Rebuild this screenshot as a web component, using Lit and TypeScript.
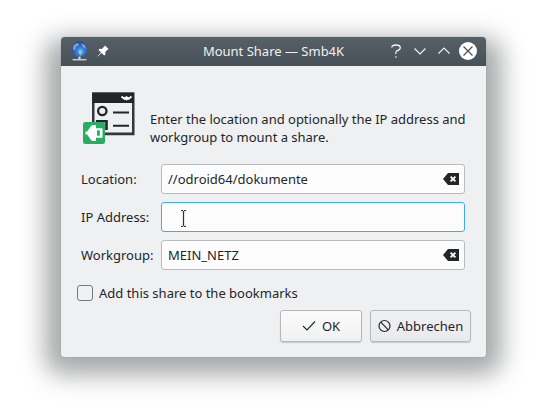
import { LitElement, html, css, svg } from "lit";
import { customElement, property } from "lit/decorators.js";

const clearIcon = svg`<svg class="clear" width="16" height="12" viewBox="0 0 16 12">
  <path d="M0 6 5 0h11v12H5z" fill="#232629"/>
  <path d="m7.6 3.6 4.8 4.8m0-4.8-4.8 4.8" stroke="#fcfcfc" stroke-width="1.9"/>
</svg>`;

@customElement("line-field")
class LineField extends LitElement {
  @property() label = "";
  @property() value = "";
  @property({ type: Boolean, reflect: true }) active = false;

  static styles = css`
    :host { display: grid; grid-template-columns: 80px 304px; height: 30px; align-items: center; }
    .box {
      box-sizing: border-box; height: 30px; border: 1px solid #b9bbbc; border-radius: 3px;
      background: #fcfcfc; display: flex; align-items: center; justify-content: space-between;
      padding: 0 5px 0 6px;
    }
    :host([active]) .box { border-color: #3daee9; padding-left: 17px; }
    .label, .value { white-space: pre; }
    .clear, .beam { display: block; }
    .beam { margin-top: 3px; overflow: visible; }
  `;

  render() {
    return html`<span class="label">${this.label}</span>
      <div class="box">
        ${this.active
          ? svg`<svg class="beam" width="9" height="17" viewBox="0 0 9 17">
              <path d="M2 1.5h5M2 15.5h5M4.5 1v15" stroke="#e4e4e4" stroke-width="3" fill="none"/>
              <path d="M2 .5h2m1 0h2M2 16.5h2m1 0h2M4.5 1v15" stroke="#333" fill="none"/>
            </svg>`
          : html`<span class="value">${this.value}</span>${clearIcon}`}
      </div>`;
  }
}

@customElement("app-root")
class AppRoot extends LitElement {
  static styles = css`
    :host {
      display: block; box-sizing: border-box; height: 418px; padding: 37px 61px 0; overflow: hidden;
      background: #fff; color: #232629; font: 13px/18px "Noto Sans", sans-serif; isolation: isolate;
    }
    .window {
      position: relative; width: 425px; height: 320px; border-radius: 4px 4px 3px 3px; background: #eff0f1;
      box-shadow: 0 0 1px rgba(50, 55, 58, .55); display: flex; flex-direction: column;
    }
    .window::before {
      content: ""; position: absolute; z-index: -1; inset: 1px -16px -18px; border-radius: 18px;
      background: rgba(35, 40, 43, .4); filter: blur(12px);
    }
    .titlebar {
      box-sizing: border-box; height: 29px; padding: 0 9px 1px 10px; border-radius: 4px 4px 0 0;
      background: linear-gradient(#566067, #475057);
      display: grid; grid-template-columns: 130px 1fr 130px; align-items: center; color: #eff0f1;
    }
    .title { text-align: center; white-space: nowrap; padding-right: 1px; }
    .left, .right { display: flex; align-items: center; }
    .left { gap: 8px; }
    .right { justify-content: flex-end; gap: 6px; }
    svg { display: block; flex: none; }
    .intro { display: flex; height: 54px; margin: 26px 0 0 22px; }
    .intro p { margin: 18px 0 0 15px; white-space: nowrap; letter-spacing: -.01px; }
    .form { display: grid; gap: 8px; margin: 18px 0 0 20px; }
    .check { display: flex; align-items: center; gap: 6px; margin: 14px 0 0 16px; height: 18px; }
    .tick { box-sizing: border-box; width: 16px; height: 16px; border: 1px solid #77797b; border-radius: 3px; }
    .actions { display: flex; justify-content: flex-end; gap: 8px; margin: 8px 15px 0 0; }
    .button {
      box-sizing: border-box; height: 32px; width: 82px; border: 1px solid #b6b8b9; border-radius: 3px;
      background: linear-gradient(#fbfbfb, #f0f1f2); box-shadow: 0 1px 1px rgba(0, 0, 0, .16);
      display: flex; align-items: center; justify-content: center; gap: 6px;
    }
    .cancel { width: 101px; background: linear-gradient(#f0f1f2, #e9eaeb); }
  `;

  render() {
    return html`
      <div class="window">
        <div class="titlebar">
          <div class="left">
            <svg width="18" height="20" viewBox="0 0 18 20">
              <defs><radialGradient id="globe" cx=".57" cy=".65" r=".6">
                <stop offset="0" stop-color="#7accf8"/><stop offset=".4" stop-color="#3580d2"/><stop offset="1" stop-color="#2c459c"/>
              </radialGradient></defs>
              <path d="M1.500 18.700h14" stroke="#c9cbcc" stroke-width="1.500"/>
              <path d="M7.500 15h2v3h-2z" fill="#e0e1e2"/>
              <circle cx="8.500" cy="8" r="7.700" fill="url(#globe)"/>
              <path d="M2 5q2-3 5-3l1 2-3 2-1 3-2 0zM10 2l4 2 1 4-3-2zM8 10l3 1-1 4-2-2z" fill="#a9cdf2" opacity=".6"/>
            </svg>
            <svg width="12" height="12" viewBox="0 0 12 12">
              <path d="M8 .4 11.600 4l-1.400.9-2 2.200.2 2.300-1.200 1L4.600 8 .6 11.600l-.3-.3L4 7.400 1.500 4.900l1-1.200 2.400.2L7 1.800z" fill="#fff"/>
            </svg>
          </div>
          <div class="title">Mount Share — Smb4K</div>
          <div class="right">
            <svg width="18" height="18" viewBox="0 0 18 18" fill="none" stroke="#eff0f1">
              <path d="M4.700 5.500Q5 3 9 3q4.300 0 4.300 2.800Q13.300 8 9.500 9q-.7.300-.7 3" stroke-width="1.300"/><path d="M8.200 15h1.300" stroke-width="1.300"/>
            </svg>
            <svg width="18" height="18" viewBox="0 0 18 18"><path d="m3.500 6.500 5.500 5.500 5.500-5.500" fill="none" stroke="#eff0f1" stroke-width="1.200"/></svg>
            <svg width="18" height="18" viewBox="0 0 18 18"><path d="M3.500 11.500 9 6l5.500 5.500" fill="none" stroke="#eff0f1" stroke-width="1.200"/></svg>
            <svg width="18" height="18" viewBox="0 0 18 18"><circle cx="9" cy="9" r="9" fill="#fff"/><path d="m4.500 4.500 9 9m0-9-9 9" stroke="#475057" stroke-width="1.200"/></svg>
          </div>
        </div>
        <div class="intro">
          <svg width="52" height="54" viewBox="0 0 52 54">
            <path d="M9 .3h42.500v43H9zM11.500 11v29.500H49V11z" fill="#33363a" fill-rule="evenodd"/>
            <path d="M9.500 1H51v10H9.500z" fill="#232629"/>
            <path d="m38.500 4.500 2.800 2.200 2.200-1.500 2.200 1.500 2.800-2.200" fill="none" stroke="#fff" stroke-width="1.900"/>
            <path d="m40.500 6 3 2.800 3-2.800z" fill="#fff"/>
            <circle cx="19.300" cy="19" r="4.200" fill="none" stroke="#232629" stroke-width="2.300"/>
            <path d="M30 20.500h16M30 33.700h16" stroke="#232629" stroke-width="2"/>
            <path d="M14.200 37v-7.700h9.300V38" fill="none" stroke="#232629" stroke-width="2.600"/>
            <rect y="30" width="22" height="22" rx="2.300" fill="#27ae60"/>
            <path d="M2.500 39.500h1.700L8 34l1.500-1H13v3.300h6.500v9.400H13V49H9.500L8 48l-3.800-5.500H2.500z" fill="#fff"/>
            <path d="M14 38.300h2.800v5.400H14z" fill="#27ae60"/>
          </svg>
          <p>Enter the location and optionally the IP address and<br>workgroup to mount a share.</p>
        </div>
        <div class="form">
          <line-field label="Location:" value="//odroid64/dokumente"></line-field>
          <line-field label="IP Address:" active></line-field>
          <line-field label="Workgroup:" value="MEIN_NETZ"></line-field>
        </div>
        <div class="check"><span class="tick"></span><span>Add this share to the bookmarks</span></div>
        <div class="actions">
          <div class="button">
            <svg width="14" height="12" viewBox="0 0 14 12"><path d="m1 6 4 4 8-8.500" fill="none" stroke="#232629" stroke-width="1.100"/></svg>
            <span>OK</span>
          </div>
          <div class="button cancel">
            <svg width="13" height="14" viewBox="0 0 13 14"><circle cx="6.500" cy="7" r="5.500" fill="none" stroke="#232629" stroke-width="1.200"/><path d="m2.700 3.200 7.600 7.600" stroke="#232629" stroke-width="1.200"/></svg>
            <span>Abbrechen</span>
          </div>
        </div>
      </div>`;
  }
}
